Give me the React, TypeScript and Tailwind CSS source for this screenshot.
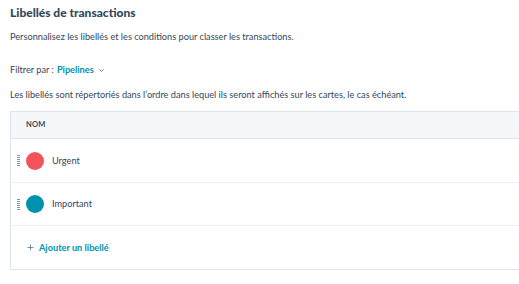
import { ChevronDown, Plus } from 'lucide-react';

const labels = [
  { name: 'Urgent', color: 'bg-[#f2545b]', height: 'h-[44px]' },
  { name: 'Important', color: 'bg-[#0091ae]', height: 'h-[43px]' },
];

function DragHandle() {
  return (
    <div className="flex flex-col gap-[1px] w-[3px]">
      {[0, 1, 2, 3, 4, 5].map((i) => (
        <div key={i} className="h-[1px] w-[3px] bg-[#7c98b6]" />
      ))}
    </div>
  );
}

export default function App() {
  return (
    <div
      className="w-[519px] h-[284px] overflow-hidden bg-white pl-[10px] text-[#33475b]"
      style={{ fontFamily: 'Lato, "Open Sans", sans-serif' }}
    >
      {/* Header */}
      <h1 className="pt-[3px] text-[12px] font-black leading-[19px]">Libellés de transactions</h1>
      <p className="mt-[8px] text-[9.2px] leading-[14px]">
        Personnalisez les libellés et les conditions pour classer les transactions.
      </p>

      {/* Filter */}
      <div className="mt-[19px] flex items-center text-[9.2px] leading-[14px]">
        <span>Filtrer par :</span>
        <span className="ml-[3px] font-bold text-[#0091ae]">Pipelines</span>
        <ChevronDown className="ml-[4px] h-[7px] w-[7px] text-[#516f90]" strokeWidth={3} />
      </div>
      <p className="mt-[11px] text-[9.2px] leading-[14px] whitespace-nowrap">
        Les libellés sont répertoriés dans l’ordre dans lequel ils seront affichés sur les cartes, le cas échéant.
      </p>

      {/* Table */}
      <div className="mt-[9px] w-[540px] border border-[#dfe3eb]">
        <div className="flex h-[27px] items-center border-b border-[#dfe3eb] bg-[#f5f8fa] pl-[15px] text-[7.5px] font-bold tracking-wide">
          NOM
        </div>
        {labels.map((label) => (
          <div
            key={label.name}
            className={`flex ${label.height} items-center border-b border-[#eaf0f6] pl-[6px] text-[9.2px]`}
          >
            <DragHandle />
            <div className={`ml-[6px] h-[18px] w-[18px] rounded-full ${label.color}`} />
            <span className="ml-[8px]">{label.name}</span>
          </div>
        ))}
        <div className="flex h-[43px] items-center pl-[15px] text-[9.2px] font-bold text-[#0091ae]">
          <Plus className="h-[9px] w-[9px] text-[#516f90]" strokeWidth={2} />
          <span className="ml-[4px]">Ajouter un libellé</span>
        </div>
      </div>
    </div>
  );
}
